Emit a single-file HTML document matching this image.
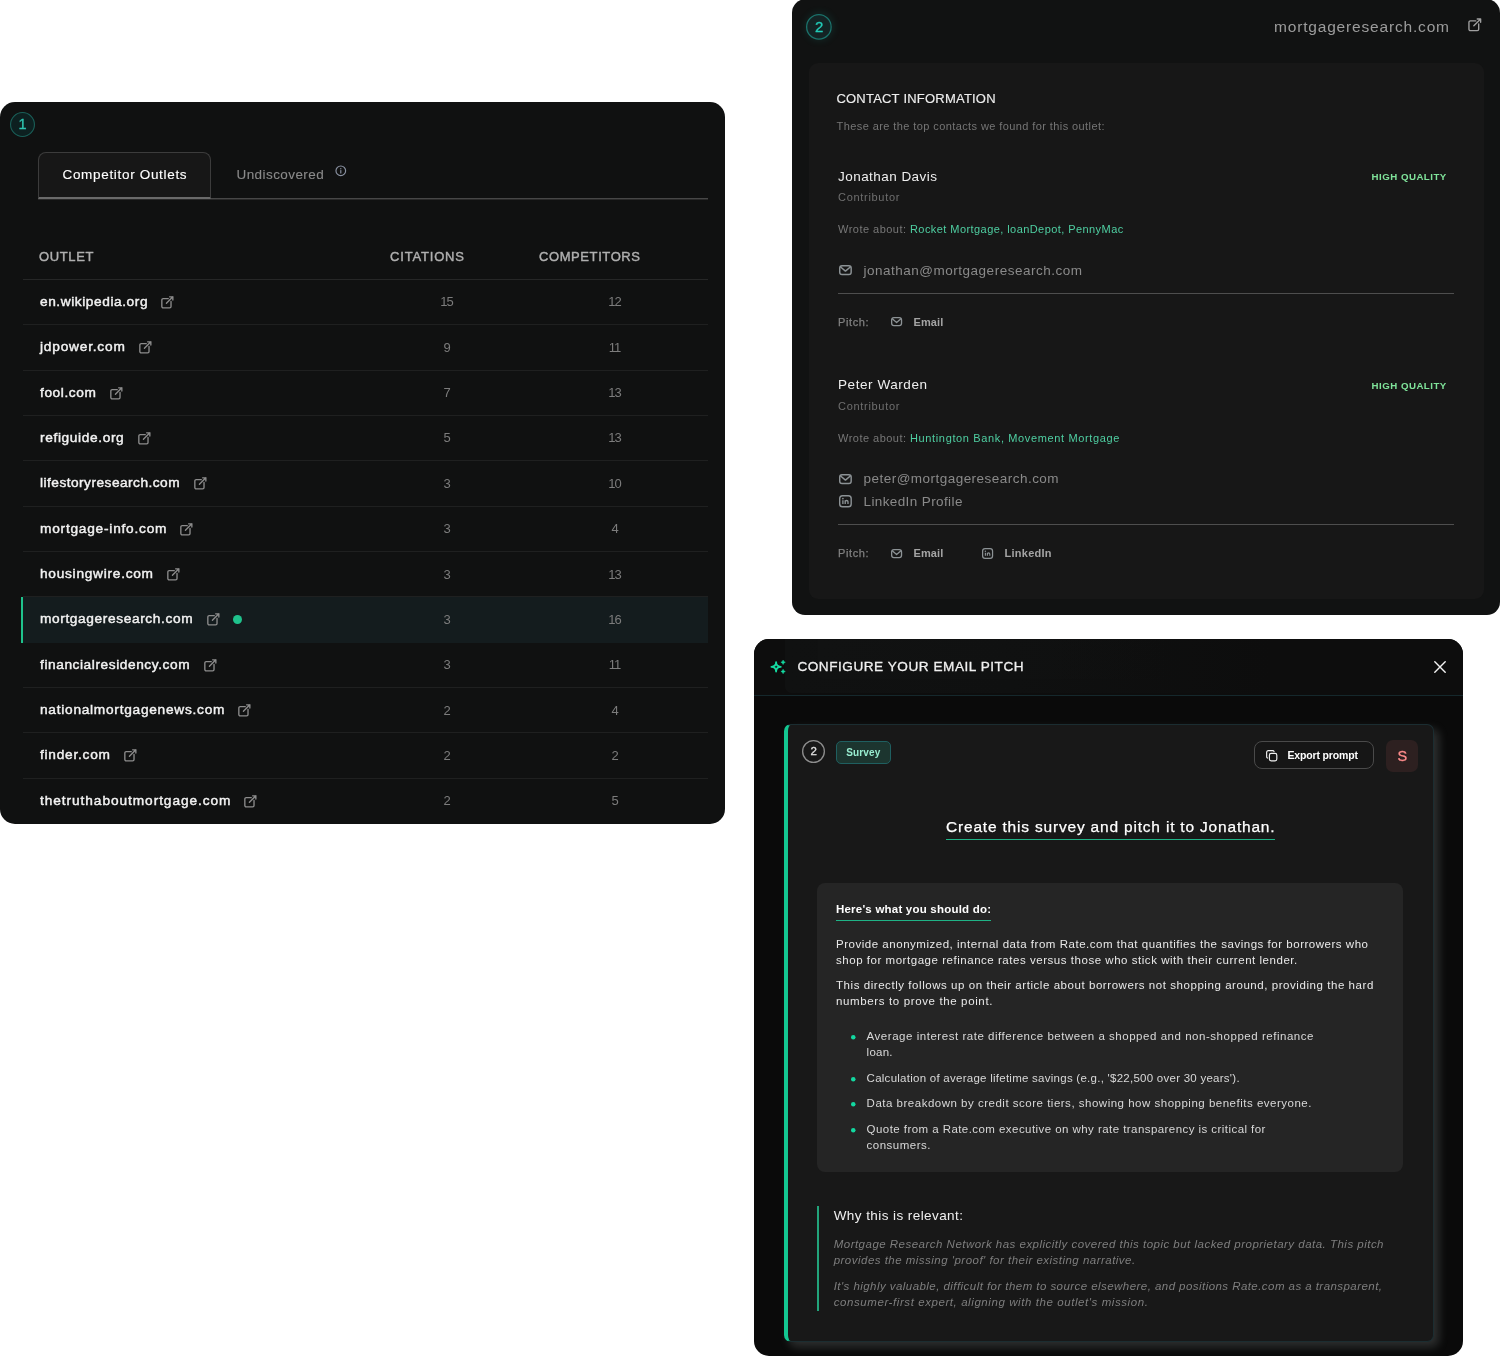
<!DOCTYPE html><html lang="en"><head><meta charset="utf-8"><title>Outlets</title><style>
html,body{margin:0;padding:0;background:#fff;}
body{width:1500px;height:1357px;position:relative;overflow:hidden;font-family:"Liberation Sans", sans-serif;}
.b{position:absolute;box-sizing:border-box;}
.t{position:absolute;white-space:pre;line-height:1;margin:0;padding:0;font-weight:400;}
.p{position:absolute;left:0;top:0;width:1500px;height:1357px;margin:0;}
#w{position:absolute;left:0;top:0;width:1500px;height:1357px;will-change:transform;}
</style></head><body><div id="w">
<section class="p" aria-label="Competitor outlets">
<div class="b" style="left:0px;top:102px;width:725px;height:722px;background:#101111;border-radius:15px;"></div>
<svg class="b" style="left:8.10px;top:110.10px;" width="29.00" height="29.00" viewBox="0 0 29.00 29.00"><circle cx="14.50" cy="14.50" r="11.95" fill="#0d2020" stroke="#1a5f58" stroke-width="1.1"/></svg>
<div class="t" style="top:117.33px;font-size:14.5px;color:#2ec4b0;left:18.46px;-webkit-text-stroke:0.35px #2ec4b0;">1</div>
<div class="b" style="left:38px;top:198px;width:670px;height:1px;background:#474747;"></div>
<div class="b" style="left:38px;top:199px;width:670px;height:1px;background:#292929;"></div>
<div class="b" style="left:38px;top:152px;width:173px;height:47px;background:#171717;border-radius:8px 8px 0 0;border:1px solid #3c3c3c;border-bottom:2px solid #6a6a6a;"></div>
<div class="t" style="top:167.87px;font-size:13.5px;color:#ffffff;left:62.50px;letter-spacing:0.680px;-webkit-text-stroke:0.12px #ffffff;">Competitor Outlets</div>
<div class="t" style="top:167.87px;font-size:13.5px;color:#8a8a8a;left:236.50px;letter-spacing:0.423px;-webkit-text-stroke:0.1px #8a8a8a;">Undiscovered</div>
<svg class="b" style="left:335.2px;top:165.3px;" width="11.6" height="11.6" viewBox="0 0 24 24" fill="none"><circle cx="12" cy="12" r="10" stroke="#8a92a2" stroke-width="2.4"/><path d="M12 11.500v5" stroke="#8a92a2" stroke-width="2.4" stroke-linecap="round"/><circle cx="12" cy="7.800" r="1.400" fill="#8a92a2"/></svg>
<div class="t" style="top:250.00px;font-size:13px;color:#b0b0b0;left:39.00px;letter-spacing:0.641px;-webkit-text-stroke:0.4px #b0b0b0;">OUTLET</div>
<div class="t" style="top:250.00px;font-size:13px;color:#b0b0b0;left:390.00px;letter-spacing:0.824px;-webkit-text-stroke:0.4px #b0b0b0;">CITATIONS</div>
<div class="t" style="top:250.00px;font-size:13px;color:#b0b0b0;left:539.00px;letter-spacing:0.589px;-webkit-text-stroke:0.4px #b0b0b0;">COMPETITORS</div>
<div class="b" style="left:23px;top:279px;width:685px;height:1px;background:#262727;"></div>
<div class="t" style="top:294.80px;font-size:13.7px;color:#f2f2f2;left:40.00px;letter-spacing:0.572px;-webkit-text-stroke:0.45px #f2f2f2;">en.wikipedia.org</div>
<svg class="b" style="left:160.4px;top:294.9px;" width="14.7" height="14.7" viewBox="0 0 24 24" fill="none"><path d="M13.5 6H5.25A2.25 2.25 0 003 8.25v10.5A2.25 2.25 0 005.25 21h10.5A2.25 2.25 0 0018 18.75V10.5m-7.5 3L21 3m0 0h-5.25M21 3v5.25" stroke="#8c8c8c" stroke-width="2.2" stroke-linecap="round" stroke-linejoin="round"/></svg>
<div class="t" style="top:295.40px;font-size:13px;color:#7c7c7c;left:440.27px;letter-spacing:-1.000px;">15</div>
<div class="t" style="top:295.40px;font-size:13px;color:#7c7c7c;left:608.27px;letter-spacing:-1.000px;">12</div>
<div class="b" style="left:23px;top:324px;width:685px;height:1px;background:#1f2020;"></div>
<div class="t" style="top:340.15px;font-size:13.7px;color:#f2f2f2;left:40.00px;letter-spacing:0.796px;-webkit-text-stroke:0.45px #f2f2f2;">jdpower.com</div>
<svg class="b" style="left:137.7px;top:340.25px;" width="14.7" height="14.7" viewBox="0 0 24 24" fill="none"><path d="M13.5 6H5.25A2.25 2.25 0 003 8.25v10.5A2.25 2.25 0 005.25 21h10.5A2.25 2.25 0 0018 18.75V10.5m-7.5 3L21 3m0 0h-5.25M21 3v5.25" stroke="#8c8c8c" stroke-width="2.2" stroke-linecap="round" stroke-linejoin="round"/></svg>
<div class="t" style="top:340.75px;font-size:13px;color:#7c7c7c;left:443.38px;">9</div>
<div class="t" style="top:340.75px;font-size:13px;color:#7c7c7c;left:608.75px;letter-spacing:-1.000px;">11</div>
<div class="b" style="left:23px;top:370px;width:685px;height:1px;background:#1f2020;"></div>
<div class="t" style="top:385.50px;font-size:13.7px;color:#f2f2f2;left:40.00px;letter-spacing:0.581px;-webkit-text-stroke:0.45px #f2f2f2;">fool.com</div>
<svg class="b" style="left:108.7px;top:385.59999999999997px;" width="14.7" height="14.7" viewBox="0 0 24 24" fill="none"><path d="M13.5 6H5.25A2.25 2.25 0 003 8.25v10.5A2.25 2.25 0 005.25 21h10.5A2.25 2.25 0 0018 18.75V10.5m-7.5 3L21 3m0 0h-5.25M21 3v5.25" stroke="#8c8c8c" stroke-width="2.2" stroke-linecap="round" stroke-linejoin="round"/></svg>
<div class="t" style="top:386.10px;font-size:13px;color:#7c7c7c;left:443.38px;">7</div>
<div class="t" style="top:386.10px;font-size:13px;color:#7c7c7c;left:608.27px;letter-spacing:-1.000px;">13</div>
<div class="b" style="left:23px;top:415px;width:685px;height:1px;background:#1f2020;"></div>
<div class="t" style="top:430.85px;font-size:13.7px;color:#f2f2f2;left:40.00px;letter-spacing:0.634px;-webkit-text-stroke:0.45px #f2f2f2;">refiguide.org</div>
<svg class="b" style="left:136.6px;top:430.95px;" width="14.7" height="14.7" viewBox="0 0 24 24" fill="none"><path d="M13.5 6H5.25A2.25 2.25 0 003 8.25v10.5A2.25 2.25 0 005.25 21h10.5A2.25 2.25 0 0018 18.75V10.5m-7.5 3L21 3m0 0h-5.25M21 3v5.25" stroke="#8c8c8c" stroke-width="2.2" stroke-linecap="round" stroke-linejoin="round"/></svg>
<div class="t" style="top:431.45px;font-size:13px;color:#7c7c7c;left:443.38px;">5</div>
<div class="t" style="top:431.45px;font-size:13px;color:#7c7c7c;left:608.27px;letter-spacing:-1.000px;">13</div>
<div class="b" style="left:23px;top:460px;width:685px;height:1px;background:#1f2020;"></div>
<div class="t" style="top:476.20px;font-size:13.7px;color:#f2f2f2;left:40.00px;letter-spacing:0.476px;-webkit-text-stroke:0.45px #f2f2f2;">lifestoryresearch.com</div>
<svg class="b" style="left:192.5px;top:476.29999999999995px;" width="14.7" height="14.7" viewBox="0 0 24 24" fill="none"><path d="M13.5 6H5.25A2.25 2.25 0 003 8.25v10.5A2.25 2.25 0 005.25 21h10.5A2.25 2.25 0 0018 18.75V10.5m-7.5 3L21 3m0 0h-5.25M21 3v5.25" stroke="#8c8c8c" stroke-width="2.2" stroke-linecap="round" stroke-linejoin="round"/></svg>
<div class="t" style="top:476.80px;font-size:13px;color:#7c7c7c;left:443.38px;">3</div>
<div class="t" style="top:476.80px;font-size:13px;color:#7c7c7c;left:608.27px;letter-spacing:-1.000px;">10</div>
<div class="b" style="left:23px;top:506px;width:685px;height:1px;background:#1f2020;"></div>
<div class="t" style="top:521.55px;font-size:13.7px;color:#f2f2f2;left:40.00px;letter-spacing:0.773px;-webkit-text-stroke:0.45px #f2f2f2;">mortgage-info.com</div>
<svg class="b" style="left:179.4px;top:521.6500000000001px;" width="14.7" height="14.7" viewBox="0 0 24 24" fill="none"><path d="M13.5 6H5.25A2.25 2.25 0 003 8.25v10.5A2.25 2.25 0 005.25 21h10.5A2.25 2.25 0 0018 18.75V10.5m-7.5 3L21 3m0 0h-5.25M21 3v5.25" stroke="#8c8c8c" stroke-width="2.2" stroke-linecap="round" stroke-linejoin="round"/></svg>
<div class="t" style="top:522.15px;font-size:13px;color:#7c7c7c;left:443.38px;">3</div>
<div class="t" style="top:522.15px;font-size:13px;color:#7c7c7c;left:611.38px;">4</div>
<div class="b" style="left:23px;top:551px;width:685px;height:1px;background:#1f2020;"></div>
<div class="t" style="top:566.90px;font-size:13.7px;color:#f2f2f2;left:40.00px;letter-spacing:0.735px;-webkit-text-stroke:0.45px #f2f2f2;">housingwire.com</div>
<svg class="b" style="left:165.9px;top:567.0000000000001px;" width="14.7" height="14.7" viewBox="0 0 24 24" fill="none"><path d="M13.5 6H5.25A2.25 2.25 0 003 8.25v10.5A2.25 2.25 0 005.25 21h10.5A2.25 2.25 0 0018 18.75V10.5m-7.5 3L21 3m0 0h-5.25M21 3v5.25" stroke="#8c8c8c" stroke-width="2.2" stroke-linecap="round" stroke-linejoin="round"/></svg>
<div class="t" style="top:567.50px;font-size:13px;color:#7c7c7c;left:443.38px;">3</div>
<div class="t" style="top:567.50px;font-size:13px;color:#7c7c7c;left:608.27px;letter-spacing:-1.000px;">13</div>
<div class="b" style="left:21px;top:596.85px;width:687px;height:45.75px;background:#141c1e;"></div>
<div class="b" style="left:21px;top:596.85px;width:2.2px;height:45.75px;background:#1fc28c;"></div>
<div class="b" style="left:23px;top:596px;width:685px;height:1px;background:#1f2020;"></div>
<div class="t" style="top:612.25px;font-size:13.7px;color:#f2f2f2;left:40.00px;letter-spacing:0.624px;-webkit-text-stroke:0.45px #f2f2f2;">mortgageresearch.com</div>
<svg class="b" style="left:205.5px;top:612.3500000000001px;" width="14.7" height="14.7" viewBox="0 0 24 24" fill="none"><path d="M13.5 6H5.25A2.25 2.25 0 003 8.25v10.5A2.25 2.25 0 005.25 21h10.5A2.25 2.25 0 0018 18.75V10.5m-7.5 3L21 3m0 0h-5.25M21 3v5.25" stroke="#8c8c8c" stroke-width="2.2" stroke-linecap="round" stroke-linejoin="round"/></svg>
<svg class="b" style="left:231.10px;top:612.75px;" width="13.00" height="13.00" viewBox="0 0 13.00 13.00"><circle cx="6.50" cy="6.50" r="4.50" fill="#1fc28c"/></svg>
<div class="t" style="top:612.85px;font-size:13px;color:#7c7c7c;left:443.38px;">3</div>
<div class="t" style="top:612.85px;font-size:13px;color:#7c7c7c;left:608.27px;letter-spacing:-1.000px;">16</div>
<div class="t" style="top:657.60px;font-size:13.7px;color:#f2f2f2;left:40.00px;letter-spacing:0.578px;-webkit-text-stroke:0.45px #f2f2f2;">financialresidency.com</div>
<svg class="b" style="left:202.5px;top:657.7px;" width="14.7" height="14.7" viewBox="0 0 24 24" fill="none"><path d="M13.5 6H5.25A2.25 2.25 0 003 8.25v10.5A2.25 2.25 0 005.25 21h10.5A2.25 2.25 0 0018 18.75V10.5m-7.5 3L21 3m0 0h-5.25M21 3v5.25" stroke="#8c8c8c" stroke-width="2.2" stroke-linecap="round" stroke-linejoin="round"/></svg>
<div class="t" style="top:658.20px;font-size:13px;color:#7c7c7c;left:443.38px;">3</div>
<div class="t" style="top:658.20px;font-size:13px;color:#7c7c7c;left:608.75px;letter-spacing:-1.000px;">11</div>
<div class="b" style="left:23px;top:687px;width:685px;height:1px;background:#1f2020;"></div>
<div class="t" style="top:702.95px;font-size:13.7px;color:#f2f2f2;left:40.00px;letter-spacing:0.740px;-webkit-text-stroke:0.45px #f2f2f2;">nationalmortgagenews.com</div>
<svg class="b" style="left:237.3px;top:703.0500000000002px;" width="14.7" height="14.7" viewBox="0 0 24 24" fill="none"><path d="M13.5 6H5.25A2.25 2.25 0 003 8.25v10.5A2.25 2.25 0 005.25 21h10.5A2.25 2.25 0 0018 18.75V10.5m-7.5 3L21 3m0 0h-5.25M21 3v5.25" stroke="#8c8c8c" stroke-width="2.2" stroke-linecap="round" stroke-linejoin="round"/></svg>
<div class="t" style="top:703.55px;font-size:13px;color:#7c7c7c;left:443.38px;">2</div>
<div class="t" style="top:703.55px;font-size:13px;color:#7c7c7c;left:611.38px;">4</div>
<div class="b" style="left:23px;top:732px;width:685px;height:1px;background:#1f2020;"></div>
<div class="t" style="top:748.30px;font-size:13.7px;color:#f2f2f2;left:40.00px;letter-spacing:0.760px;-webkit-text-stroke:0.45px #f2f2f2;">finder.com</div>
<svg class="b" style="left:122.9px;top:748.4000000000001px;" width="14.7" height="14.7" viewBox="0 0 24 24" fill="none"><path d="M13.5 6H5.25A2.25 2.25 0 003 8.25v10.5A2.25 2.25 0 005.25 21h10.5A2.25 2.25 0 0018 18.75V10.5m-7.5 3L21 3m0 0h-5.25M21 3v5.25" stroke="#8c8c8c" stroke-width="2.2" stroke-linecap="round" stroke-linejoin="round"/></svg>
<div class="t" style="top:748.90px;font-size:13px;color:#7c7c7c;left:443.38px;">2</div>
<div class="t" style="top:748.90px;font-size:13px;color:#7c7c7c;left:611.38px;">2</div>
<div class="b" style="left:23px;top:778px;width:685px;height:1px;background:#1f2020;"></div>
<div class="t" style="top:793.65px;font-size:13.7px;color:#f2f2f2;left:40.00px;letter-spacing:0.931px;-webkit-text-stroke:0.45px #f2f2f2;">thetruthaboutmortgage.com</div>
<svg class="b" style="left:243.4px;top:793.7500000000001px;" width="14.7" height="14.7" viewBox="0 0 24 24" fill="none"><path d="M13.5 6H5.25A2.25 2.25 0 003 8.25v10.5A2.25 2.25 0 005.25 21h10.5A2.25 2.25 0 0018 18.75V10.5m-7.5 3L21 3m0 0h-5.25M21 3v5.25" stroke="#8c8c8c" stroke-width="2.2" stroke-linecap="round" stroke-linejoin="round"/></svg>
<div class="t" style="top:794.25px;font-size:13px;color:#7c7c7c;left:443.38px;">2</div>
<div class="t" style="top:794.25px;font-size:13px;color:#7c7c7c;left:611.38px;">5</div>
</section>
<section class="p" aria-label="Contact information">
<div class="b" style="left:792px;top:-1px;width:708px;height:615.8px;background:#111212;border-radius:14px 14px 13px 13px;"></div>
<div class="b" style="left:808.8px;top:63px;width:674.8px;height:536px;background:#171717;border-radius:9px;"></div>
<div class="b" style="left:807px;top:14px;width:25px;height:25px;background:transparent;border-radius:13px;box-shadow:0 0 8px 1px rgba(30,190,170,0.14);"></div>
<svg class="b" style="left:804.30px;top:11.90px;" width="29.80" height="29.80" viewBox="0 0 29.80 29.80"><circle cx="14.90" cy="14.90" r="12.25" fill="#142324" stroke="#1b726b" stroke-width="1.3"/></svg>
<div class="t" style="top:19.40px;font-size:15px;color:#22cbb8;left:814.93px;-webkit-text-stroke:0.3px #22cbb8;">2</div>
<div class="t" style="top:19.48px;font-size:15.5px;color:#9c9c9c;left:1274.00px;letter-spacing:0.822px;">mortgageresearch.com</div>
<svg class="b" style="left:1467.1px;top:16.8px;" width="15.6" height="15.6" viewBox="0 0 24 24" fill="none"><path d="M13.5 6H5.25A2.25 2.25 0 003 8.25v10.5A2.25 2.25 0 005.25 21h10.5A2.25 2.25 0 0018 18.75V10.5m-7.5 3L21 3m0 0h-5.25M21 3v5.25" stroke="#a0a0a0" stroke-width="2.1" stroke-linecap="round" stroke-linejoin="round"/></svg>
<h2 class="t" style="top:92.40px;font-size:13px;color:#eeeeee;left:836.40px;letter-spacing:0.218px;-webkit-text-stroke:0.15px #eeeeee;">CONTACT INFORMATION</h2>
<div class="t" style="top:120.69px;font-size:11px;color:#757575;left:836.60px;letter-spacing:0.409px;">These are the top contacts we found for this outlet:</div>
<div class="t" style="top:169.57px;font-size:13.5px;color:#efefef;left:838.00px;letter-spacing:0.457px;">Jonathan Davis</div>
<div class="t" style="top:172.09px;font-size:9.7px;color:#7fe39a;left:1371.60px;font-weight:700;letter-spacing:0.478px;">HIGH QUALITY</div>
<div class="t" style="top:191.99px;font-size:11px;color:#6f6f6f;left:838.00px;letter-spacing:0.698px;">Contributor</div>
<div class="t" style="top:224.29px;font-size:11px;color:#777777;left:838.00px;letter-spacing:0.474px;">Wrote about:</div>
<div class="t" style="top:224.29px;font-size:11px;color:#4fcfa2;left:910.00px;letter-spacing:0.431px;">Rocket Mortgage, loanDepot, PennyMac</div>
<svg class="b" style="left:837.1px;top:263.0px;" width="16.9" height="14.2" viewBox="0 0 16.90 14.20" fill="none"><rect x="2.73" y="2.73" width="11.45" height="8.75" rx="2.3" stroke="#8c9295" stroke-width="1.45"/><path d="M3.62 4.03L8.45 8.12L13.28 4.03" stroke="#8c9295" stroke-width="1.45" stroke-linecap="round" stroke-linejoin="round"/></svg>
<div class="t" style="top:263.57px;font-size:13.5px;color:#8a8a8a;left:863.50px;letter-spacing:0.506px;">jonathan@mortgageresearch.com</div>
<div class="b" style="left:838px;top:292.59999999999997px;width:616px;height:1.2px;background:#4e4e4e;"></div>
<div class="t" style="top:317.09px;font-size:11px;color:#808080;left:838.00px;letter-spacing:0.617px;-webkit-text-stroke:0.25px #808080;">Pitch:</div>
<svg class="b" style="left:888.7px;top:315.4px;" width="15.2" height="13.2" viewBox="0 0 15.20 13.20" fill="none"><rect x="2.65" y="2.65" width="9.90" height="7.90" rx="2.3" stroke="#8c9295" stroke-width="1.3"/><path d="M3.55 3.95L7.60 7.52L11.65 3.95" stroke="#8c9295" stroke-width="1.3" stroke-linecap="round" stroke-linejoin="round"/></svg>
<div class="t" style="top:317.09px;font-size:11px;color:#a4a4a4;left:913.40px;font-weight:700;letter-spacing:0.160px;">Email</div>
<div class="t" style="top:378.37px;font-size:13.5px;color:#efefef;left:838.00px;letter-spacing:0.564px;">Peter Warden</div>
<div class="t" style="top:380.89px;font-size:9.7px;color:#7fe39a;left:1371.60px;font-weight:700;letter-spacing:0.478px;">HIGH QUALITY</div>
<div class="t" style="top:400.79px;font-size:11px;color:#6f6f6f;left:838.00px;letter-spacing:0.698px;">Contributor</div>
<div class="t" style="top:433.09px;font-size:11px;color:#777777;left:838.00px;letter-spacing:0.474px;">Wrote about:</div>
<div class="t" style="top:433.09px;font-size:11px;color:#4fcfa2;left:910.00px;letter-spacing:0.639px;">Huntington Bank, Movement Mortgage</div>
<svg class="b" style="left:837.1px;top:471.8px;" width="16.9" height="14.2" viewBox="0 0 16.90 14.20" fill="none"><rect x="2.73" y="2.73" width="11.45" height="8.75" rx="2.3" stroke="#8c9295" stroke-width="1.45"/><path d="M3.62 4.03L8.45 8.12L13.28 4.03" stroke="#8c9295" stroke-width="1.45" stroke-linecap="round" stroke-linejoin="round"/></svg>
<div class="t" style="top:472.37px;font-size:13.5px;color:#8a8a8a;left:863.50px;letter-spacing:0.472px;">peter@mortgageresearch.com</div>
<svg class="b" style="left:837.1px;top:493.1px;" width="16.9" height="16.5" viewBox="0 0 16.90 16.50" fill="none"><rect x="2.70" y="2.70" width="11.50" height="11.10" rx="2.80" stroke="#8c9295" stroke-width="1.4"/><path d="M5.90 7.35V10.95M8.20 7.35V10.95M8.20 8.85a1.40 1.40 0 0 1 2.80 0V10.95" stroke="#8c9295" stroke-width="1.35" stroke-linecap="butt"/><circle cx="5.90" cy="5.55" r="0.85" fill="#8c9295"/></svg>
<div class="t" style="top:494.97px;font-size:13.5px;color:#8a8a8a;left:863.50px;letter-spacing:0.389px;">LinkedIn Profile</div>
<div class="b" style="left:838px;top:524.0px;width:616px;height:1.2px;background:#4e4e4e;"></div>
<div class="t" style="top:548.49px;font-size:11px;color:#808080;left:838.00px;letter-spacing:0.617px;-webkit-text-stroke:0.25px #808080;">Pitch:</div>
<svg class="b" style="left:888.7px;top:546.8px;" width="15.2" height="13.2" viewBox="0 0 15.20 13.20" fill="none"><rect x="2.65" y="2.65" width="9.90" height="7.90" rx="2.3" stroke="#8c9295" stroke-width="1.3"/><path d="M3.55 3.95L7.60 7.52L11.65 3.95" stroke="#8c9295" stroke-width="1.3" stroke-linecap="round" stroke-linejoin="round"/></svg>
<div class="t" style="top:548.49px;font-size:11px;color:#a4a4a4;left:913.40px;font-weight:700;letter-spacing:0.160px;">Email</div>
<svg class="b" style="left:979.8px;top:545.8px;" width="15.2" height="15" viewBox="0 0 15.20 15.00" fill="none"><rect x="2.62" y="2.62" width="9.95" height="9.75" rx="2.43" stroke="#8c9295" stroke-width="1.25"/><path d="M5.39 6.72V9.84M7.38 6.72V9.84M7.38 8.02a1.22 1.22 0 0 1 2.43 0V9.84" stroke="#8c9295" stroke-width="1.17" stroke-linecap="butt"/><circle cx="5.39" cy="5.16" r="0.74" fill="#8c9295"/></svg>
<div class="t" style="top:548.49px;font-size:11px;color:#a4a4a4;left:1004.60px;font-weight:700;letter-spacing:0.252px;">LinkedIn</div>
</section>
<section class="p" aria-label="Configure your email pitch">
<div class="b" style="left:754px;top:639px;width:709px;height:717px;background:#0a0a0a;border-radius:15px;overflow:hidden;"></div>
<div class="b" style="left:754px;top:639px;width:709px;height:57px;background:#0d0d0d;border-radius:15px 15px 0 0;border-bottom:1px solid #15282c;"></div>
<div class="b" style="left:785px;top:639px;width:649px;height:53.5px;background:linear-gradient(90deg,#101111 0%,#0f1010 35%,rgba(13,13,13,0) 75%);border-radius:0 0 0 7px;"></div>
<div class="b" style="left:817.6px;top:639px;width:585px;height:40px;background:linear-gradient(90deg,#111212 0%,rgba(13,13,13,0) 60%);border-radius:0 0 0 7px;"></div>
<svg class="b" style="left:766px;top:656px;" width="22" height="22" viewBox="0 0 22 22" fill="none"><path d="M10.1 6.1000000000000005Q10.1 10.8 14.8 10.8Q10.1 10.8 10.1 15.5Q10.1 10.8 5.3999999999999995 10.8Q10.1 10.8 10.1 6.1000000000000005Z" stroke="#14dca2" stroke-width="1.8" stroke-linejoin="round"/><path d="M17.1 4.1Q17.450000000000003 5.95 19.3 6.3Q17.450000000000003 6.6499999999999995 17.1 8.5Q16.75 6.6499999999999995 14.900000000000002 6.3Q16.75 5.95 17.1 4.1Z" fill="#14dca2" stroke="#14dca2" stroke-width="0.5" stroke-linejoin="round"/><path d="M17.1 13.3Q17.450000000000003 15.15 19.3 15.5Q17.450000000000003 15.85 17.1 17.7Q16.75 15.85 14.900000000000002 15.5Q16.75 15.15 17.1 13.3Z" fill="#14dca2" stroke="#14dca2" stroke-width="0.5" stroke-linejoin="round"/></svg>
<h2 class="t" style="top:659.69px;font-size:13.6px;color:#f0f0f0;left:797.40px;letter-spacing:0.528px;-webkit-text-stroke:0.3px #f0f0f0;">CONFIGURE YOUR EMAIL PITCH</h2>
<svg class="b" style="left:1434px;top:660.5px;" width="12" height="12" viewBox="0 0 12 12" fill="none"><path d="M0.800 0.800L11.200 11.200M11.200 0.800L0.800 11.200" stroke="#f2f2f2" stroke-width="1.4" stroke-linecap="round"/></svg>
<div class="b" style="left:784px;top:724px;width:650px;height:617.5px;background:#181818;border-radius:7px;border:1px solid #1b2d31;border-left:4.3px solid #14c792;box-shadow:5px 5px 10px 0px rgba(180,190,190,0.21);"></div>
<svg class="b" style="left:800.20px;top:738.30px;" width="27.00" height="27.00" viewBox="0 0 27.00 27.00"><circle cx="13.50" cy="13.50" r="10.85" fill="none" stroke="#8e8e8e" stroke-width="1.3"/></svg>
<div class="t" style="top:746.27px;font-size:11.5px;color:#e0e0e0;left:810.50px;-webkit-text-stroke:0.3px #e0e0e0;">2</div>
<div class="b" style="left:836px;top:741px;width:55px;height:22.8px;background:#1c352f;border-radius:5px;border:1px solid #1f5f60;"></div>
<div class="t" style="top:747.83px;font-size:10px;color:#98ecd0;left:846.20px;font-weight:700;letter-spacing:0.168px;">Survey</div>
<div class="b" style="left:1254px;top:741px;width:120px;height:28px;background:#161616;border-radius:8px;border:1px solid #4a4a4a;"></div>
<svg class="b" style="left:1265.3px;top:748.7px;" width="13.2" height="13.2" viewBox="0 0 24 24" fill="none"><rect x="8" y="8" width="13.500" height="13.500" rx="3.200" stroke="#f0f0f0" stroke-width="2.100"/><path d="M16.500 4.600A2.700 2.700 0 0 0 14 3H6a3 3 0 0 0-3 3v8a2.700 2.700 0 0 0 1.600 2.500" stroke="#f0f0f0" stroke-width="2.100" stroke-linecap="round"/></svg>
<div class="t" style="top:750.11px;font-size:10.5px;color:#ffffff;left:1287.40px;font-weight:700;letter-spacing:-0.145px;">Export prompt</div>
<div class="b" style="left:1386.4px;top:739.6px;width:31.8px;height:32px;background:#2d2020;border-radius:7px;"></div>
<div class="t" style="top:749.33px;font-size:14.5px;color:#ff8c8c;left:1397.56px;-webkit-text-stroke:0.3px #ff8c8c;">S</div>
<h3 class="t" style="top:818.88px;font-size:15.5px;color:#ffffff;left:946.00px;letter-spacing:0.809px;-webkit-text-stroke:0.25px #ffffff;">Create this survey and pitch it to Jonathan.</h3>
<div class="b" style="left:946px;top:838.6px;width:328.6px;height:1.3px;background:#1fb386;"></div>
<div class="b" style="left:817.4px;top:883px;width:585.4px;height:289px;background:#252525;border-radius:8px;"></div>
<h4 class="t" style="top:903.97px;font-size:11.5px;color:#ffffff;left:836.00px;font-weight:700;letter-spacing:0.212px;">Here's what you should do:</h4>
<div class="b" style="left:836px;top:919.6px;width:155px;height:1.6px;background:#1fb386;"></div>
<div class="t" style="top:938.87px;font-size:11.5px;color:#e9e9e9;left:836.00px;letter-spacing:0.523px;">Provide anonymized, internal data from Rate.com that quantifies the savings for borrowers who</div>
<div class="t" style="top:954.87px;font-size:11.5px;color:#e9e9e9;left:836.00px;letter-spacing:0.535px;">shop for mortgage refinance rates versus those who stick with their current lender.</div>
<div class="t" style="top:980.27px;font-size:11.5px;color:#e9e9e9;left:836.00px;letter-spacing:0.556px;">This directly follows up on their article about borrowers not shopping around, providing the hard</div>
<div class="t" style="top:996.27px;font-size:11.5px;color:#e9e9e9;left:836.00px;letter-spacing:0.631px;">numbers to prove the point.</div>
<svg class="b" style="left:848.55px;top:1032.95px;" width="8.50" height="8.50" viewBox="0 0 8.50 8.50"><circle cx="4.25" cy="4.25" r="2.25" fill="#12d8a0"/></svg>
<div class="t" style="top:1030.87px;font-size:11.5px;color:#d8d8d8;left:866.60px;letter-spacing:0.534px;">Average interest rate difference between a shopped and non-shopped refinance</div>
<div class="t" style="top:1047.07px;font-size:11.5px;color:#d8d8d8;left:866.60px;letter-spacing:0.241px;">loan.</div>
<svg class="b" style="left:848.55px;top:1075.35px;" width="8.50" height="8.50" viewBox="0 0 8.50 8.50"><circle cx="4.25" cy="4.25" r="2.25" fill="#12d8a0"/></svg>
<div class="t" style="top:1073.27px;font-size:11.5px;color:#d8d8d8;left:866.60px;letter-spacing:0.258px;">Calculation of average lifetime savings (e.g., '$22,500 over 30 years').</div>
<svg class="b" style="left:848.55px;top:1100.35px;" width="8.50" height="8.50" viewBox="0 0 8.50 8.50"><circle cx="4.25" cy="4.25" r="2.25" fill="#12d8a0"/></svg>
<div class="t" style="top:1098.27px;font-size:11.5px;color:#d8d8d8;left:866.60px;letter-spacing:0.504px;">Data breakdown by credit score tiers, showing how shopping benefits everyone.</div>
<svg class="b" style="left:848.55px;top:1125.65px;" width="8.50" height="8.50" viewBox="0 0 8.50 8.50"><circle cx="4.25" cy="4.25" r="2.25" fill="#12d8a0"/></svg>
<div class="t" style="top:1123.57px;font-size:11.5px;color:#d8d8d8;left:866.60px;letter-spacing:0.441px;">Quote from a Rate.com executive on why rate transparency is critical for</div>
<div class="t" style="top:1139.77px;font-size:11.5px;color:#d8d8d8;left:866.60px;letter-spacing:0.496px;">consumers.</div>
<div class="b" style="left:816.6px;top:1205.7px;width:2px;height:105.5px;background:#22a47b;"></div>
<h4 class="t" style="top:1208.57px;font-size:13.5px;color:#f0f0f0;left:833.70px;letter-spacing:0.425px;">Why this is relevant:</h4>
<div class="t" style="top:1239.07px;font-size:11.5px;color:#7e7e7e;left:833.70px;font-style:italic;letter-spacing:0.484px;">Mortgage Research Network has explicitly covered this topic but lacked proprietary data. This pitch</div>
<div class="t" style="top:1255.27px;font-size:11.5px;color:#7e7e7e;left:833.70px;font-style:italic;letter-spacing:0.480px;">provides the missing 'proof' for their existing narrative.</div>
<div class="t" style="top:1281.17px;font-size:11.5px;color:#7e7e7e;left:833.70px;font-style:italic;letter-spacing:0.445px;">It's highly valuable, difficult for them to source elsewhere, and positions Rate.com as a transparent,</div>
<div class="t" style="top:1297.27px;font-size:11.5px;color:#7e7e7e;left:833.70px;font-style:italic;letter-spacing:0.577px;">consumer-first expert, aligning with the outlet's mission.</div>
</section>
</div></body></html>
